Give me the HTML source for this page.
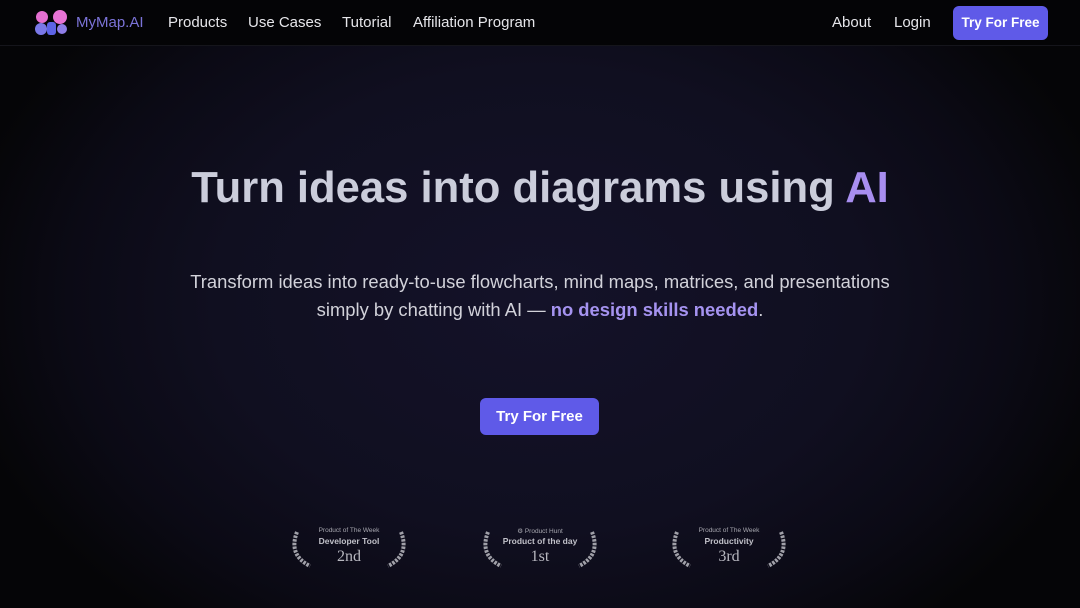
<!DOCTYPE html>
<html><head><meta charset="utf-8"><style>
*{margin:0;padding:0;box-sizing:border-box}
body{width:1080px;height:608px;overflow:hidden;font-family:"Liberation Sans",sans-serif;background:radial-gradient(ellipse 590px 420px at 540px 300px,#141229 0%,#100f20 55%,#0b0a15 80%,#050507 100%);position:relative;color:#fff}
.nav{position:absolute;left:0;top:0;width:1080px;height:46px;background:#040406;border-bottom:1px solid #15151b}
.nav a{position:absolute;top:14px;font-size:15px;color:#e6e6ea;white-space:nowrap}
.logo{position:absolute;left:76px;top:14px;font-size:15px;color:#7b73d8}
.btn{position:absolute;background:#5f5ae8;color:#fff;font-weight:bold;border-radius:6px;text-align:center}
h1{position:absolute;top:164px;left:0;width:1080px;text-align:center;font-size:43.6px;font-weight:bold;color:#cbcddb}
h1 span{color:#a88ef0}
p.sub{position:absolute;top:268px;left:0;width:1080px;text-align:center;font-size:18.4px;line-height:28px;color:#d2d2da}
p.sub b{color:#a593f0}
.badge{position:absolute;top:527px;width:120px;height:44px;text-align:center;color:#a6a6ae}
.badge .s{font-size:6.5px;display:block;height:9px}
.badge .m{font-size:8.5px;font-weight:bold;display:block;color:#c0c0c8}
.badge .r{font-family:"Liberation Serif",serif;font-size:16px;display:block;margin-top:2px;color:#b8b8c0}
.badge svg{position:absolute;top:4px}
</style></head><body>
<div class="nav">
<svg style="position:absolute;left:34px;top:9px" width="36" height="28" viewBox="0 0 36 28">
<circle cx="8" cy="8" r="6" fill="#e46fd0"/><circle cx="26" cy="8" r="7" fill="#e873d5"/>
<circle cx="7" cy="20" r="6" fill="#7a78e8"/><rect x="13" y="13" width="9" height="13" rx="3" fill="#5d63e6"/><circle cx="28" cy="20" r="5" fill="#8f7ee8"/>
</svg>
<span class="logo">MyMap.AI</span>
<a style="left:168px">Products</a><a style="left:248px">Use Cases</a><a style="left:342px">Tutorial</a><a style="left:413px">Affiliation Program</a>
<a style="left:832px">About</a><a style="left:894px">Login</a>
<div class="btn" style="left:953px;top:6px;width:95px;height:34px;line-height:34px;font-size:13.5px">Try For Free</div>
</div>
<h1>Turn ideas into diagrams using <span>AI</span></h1>
<p class="sub">Transform ideas into ready-to-use flowcharts, mind maps, matrices, and presentations<br>simply by chatting with AI — <b>no design skills needed</b>.</p>
<div class="btn" style="left:480px;top:398px;width:119px;height:37px;line-height:37px;font-size:15px">Try For Free</div>

<div class="badge" style="left:289px"><span class="s">Product of The Week</span><span class="m">Developer Tool</span><span class="r">2nd</span>
<svg style="left:0" width="120" height="40" viewBox="0 0 120 40"><g fill="none" stroke="#a0a0a8" stroke-width="4" stroke-dasharray="2.5 1.2"><path d="M8 1 Q-1 24 21 35"/><path d="M112 1 Q121 24 99 35"/></g></svg></div>
<div class="badge" style="left:480px"><span class="s">⚙ Product Hunt</span><span class="m">Product of the day</span><span class="r">1st</span>
<svg style="left:0" width="120" height="40" viewBox="0 0 120 40"><g fill="none" stroke="#a0a0a8" stroke-width="4" stroke-dasharray="2.5 1.2"><path d="M8 1 Q-1 24 21 35"/><path d="M112 1 Q121 24 99 35"/></g></svg></div>
<div class="badge" style="left:669px"><span class="s">Product of The Week</span><span class="m">Productivity</span><span class="r">3rd</span>
<svg style="left:0" width="120" height="40" viewBox="0 0 120 40"><g fill="none" stroke="#a0a0a8" stroke-width="4" stroke-dasharray="2.5 1.2"><path d="M8 1 Q-1 24 21 35"/><path d="M112 1 Q121 24 99 35"/></g></svg></div>
</body></html>
